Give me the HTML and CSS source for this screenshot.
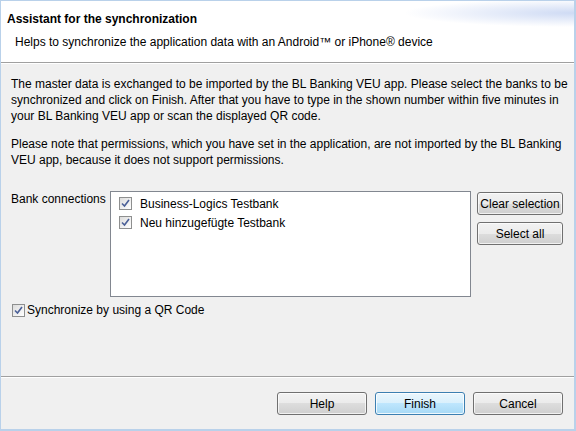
FILE: index.html
```html
<!DOCTYPE html>
<html>
<head>
<meta charset="utf-8">
<link rel="stylesheet" href="styles.css">
</head>
<body>
<div class="window">
  <div class="header">
    <div class="title">Assistant for the synchronization</div>
    <div class="subtitle">Helps to synchronize the application data with an Android™ or iPhone® device</div>
  </div>
  <div class="content">
    <p class="para">The master data is exchanged to be imported by the BL Banking VEU app. Please select the banks to be<br>synchronized and click on Finish. After that you have to type in the shown number within five minutes in<br>your BL Banking VEU app or scan the displayed QR code.</p>
    <p class="para">Please note that permissions, which you have set in the application, are not imported by the BL Banking<br>VEU app, because it does not support permissions.</p>
    <div class="bank-row">
      <div class="bank-label">Bank connections</div>
      <div class="listbox">
        <div class="item"><span class="cb"><svg viewBox="0 0 9 9" width="9" height="9"><path d="M1 4.5 L3.5 7 L8 1" fill="none" stroke="#4a5f97" stroke-width="1.6"/></svg></span><span>Business-Logics Testbank</span></div>
        <div class="item"><span class="cb"><svg viewBox="0 0 9 9" width="9" height="9"><path d="M1 4.5 L3.5 7 L8 1" fill="none" stroke="#4a5f97" stroke-width="1.6"/></svg></span><span>Neu hinzugefügte Testbank</span></div>
      </div>
      <div class="side-buttons">
        <button class="btn small">Clear selection</button>
        <button class="btn small">Select all</button>
      </div>
    </div>
    <div class="qr-row"><span class="cb"><svg viewBox="0 0 9 9" width="9" height="9"><path d="M1 4.5 L3.5 7 L8 1" fill="none" stroke="#4a5f97" stroke-width="1.6"/></svg></span><span>Synchronize by using a QR Code</span></div>
  </div>
  <div class="footer">
    <button class="btn wide">Help</button>
    <button class="btn wide default">Finish</button>
    <button class="btn wide">Cancel</button>
  </div>
</div>
</body>
</html>
```
FILE: styles.css
```css
html, body {
  margin: 0;
  padding: 0;
  background: #f0f0f0;
}
body {
  font-family: "Liberation Sans", Arial, sans-serif;
  font-size: 12px;
  color: #000;
}
.window {
  width: 576px;
  height: 431px;
  box-sizing: border-box;
  border: 1px solid #b9d1ea;
  border-right-width: 2px;
  border-bottom-width: 2px;
  display: flex;
  flex-direction: column;
  background: #f0f0f0;
  overflow: hidden;
}
.header {
  height: 62px;
  box-sizing: border-box;
  background:
    radial-gradient(ellipse 170px 14px at 100% 12px, rgba(190,206,240,0.75), rgba(255,255,255,0) 100%),
    #fff;
  border-bottom: 1px solid #a0a0a0;
  box-shadow: 0 1px 0 #fff;
  padding: 11px 0 0 6px;
}
.title {
  font-weight: bold;
  font-size: 12px;
  line-height: 15px;
  color: #000;
}
.subtitle {
  margin: 8px 0 0 8px;
  line-height: 15px;
}
.content {
  flex: 1;
  padding: 12px 10px 0 10px;
  margin-top: 1px;
}
.para {
  margin: 0 0 12px 0;
  line-height: 16px;
  white-space: nowrap;
}
.bank-row {
  display: flex;
  margin-top: 23px;
}
.bank-label {
  width: 99px;
  line-height: 16px;
}
.listbox {
  width: 361px;
  height: 106px;
  box-sizing: border-box;
  border: 1px solid #828790;
  background: #fff;
  padding: 2px 0 0 8px;
}
.item {
  display: flex;
  align-items: center;
  height: 19px;
}
.item .cb {
  margin-right: 8px;
}
.cb {
  width: 13px;
  height: 13px;
  box-sizing: border-box;
  border: 1px solid #8e8f8f;
  background: linear-gradient(135deg, #dcdcdc, #ffffff);
  display: inline-flex;
  align-items: center;
  justify-content: center;
  flex: none;
}
.cb svg {
  display: block;
}
.side-buttons {
  display: flex;
  flex-direction: column;
  gap: 7px;
  margin-left: 6px;
  margin-top: 1px;
}
.btn {
  font-family: "Liberation Sans", Arial, sans-serif;
  font-size: 12px;
  color: #000;
  height: 23px;
  box-sizing: border-box;
  border: 1px solid #707070;
  border-radius: 3px;
  background: linear-gradient(#f2f2f2 0%, #ebebeb 50%, #dddddd 50%, #cfcfcf 100%);
  box-shadow: inset 0 0 0 1px rgba(255,255,255,0.7);
  padding: 0;
}
.btn.small {
  width: 86px;
}
.btn.wide {
  width: 90px;
}
.btn.default {
  border-color: #3c7fb1;
  background: linear-gradient(#eaf6fd 0%, #d9f0fc 50%, #bee6fd 50%, #a7d9f5 100%);
  box-shadow: inset 0 0 0 1px rgba(255,255,255,0.8);
}
.qr-row {
  display: flex;
  align-items: center;
  margin-top: 6px;
  margin-left: 1px;
  height: 14px;
}
.qr-row .cb {
  margin-right: 2px;
}
.footer {
  height: 53px;
  box-sizing: border-box;
  border-top: 1px solid #a0a0a0;
  box-shadow: inset 0 1px 0 #fff;
  display: flex;
  justify-content: flex-end;
  gap: 8px;
  padding: 15px 11px 0 0;
}
```
